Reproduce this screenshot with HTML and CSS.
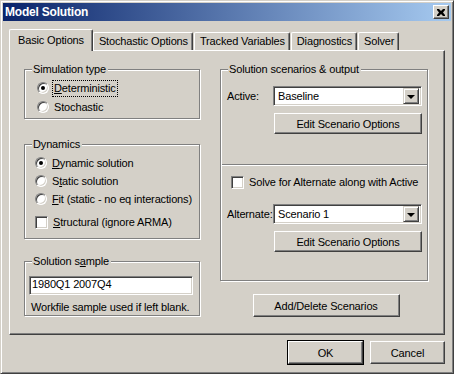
FILE: index.html
```html
<!DOCTYPE html>
<html lang="en">
<head>
    <meta charset="UTF-8">
    <title>Model Solution</title>
    <link rel="stylesheet" href="styles.css">
</head>
<body>

    <div class="window">
        <div class="titlebar">
            <span class="title">Model Solution</span>
            <span class="close-btn">
                <svg width="8" height="7" viewBox="0 0 8 7">
                    <path d="M0 0h2l2 2 2-2h2v1l-2 2.5 2 2.5v1h-2l-2-2-2 2h-2v-1l2-2.5-2-2.5z" fill="#000"/>
                </svg>
            </span>
        </div>

        <div class="content">
            <div class="tabs">
                <div class="tab selected">Basic Options</div>
                <div class="tab">Stochastic Options</div>
                <div class="tab">Tracked Variables</div>
                <div class="tab">Diagnostics</div>
                <div class="tab">Solver</div>
            </div>

            <div class="panel">
                <div class="col-left">
                    <div class="group group-sim">
                        <div class="group-title">Simulation type</div>
                        <div class="group-body">
                            <div class="option option-sim"><span class="radio checked"></span><span class="focus"><u>D</u>eterministic</span></div>
                            <div class="option option-sim"><span class="radio"></span><span class="label-text">Stochastic</span></div>
                        </div>
                    </div>

                    <div class="group group-dyn">
                        <div class="group-title">Dynamics</div>
                        <div class="group-body">
                            <div class="option"><span class="radio checked"></span><span><u>D</u>ynamic solution</span></div>
                            <div class="option"><span class="radio"></span><span>S<u>t</u>atic solution</span></div>
                            <div class="option"><span class="radio"></span><span><u>F</u>it (static - no eq interactions)</span></div>
                            <div class="option option-check"><span class="checkbox"></span><span><u>S</u>tructural (ignore ARMA)</span></div>
                        </div>
                    </div>

                    <div class="group group-sample">
                        <div class="group-title">Solution s<u>a</u>mple</div>
                        <div class="group-body">
                            <div class="edit">1980Q1 2007Q4</div>
                            <div class="hint">Workfile sample used if left blank.</div>
                        </div>
                    </div>
                </div>

                <div class="col-right">
                    <div class="group group-scen">
                        <div class="group-title">Solution scenarios &amp; output</div>
                        <div class="group-body">
                            <div class="field-row field-active">
                                <span class="field-label">Active:</span>
                                <div class="combo">
                                    <span class="combo-text">Baseline</span>
                                    <span class="combo-arrow"><span class="tri"></span></span>
                                </div>
                            </div>
                            <div class="btn-row"><button class="btn btn-wide">Edit Scenario Options</button></div>

                            <div class="separator"></div>

                            <div class="option option-alt"><span class="checkbox"></span><span>Solve for Alternate along with Active</span></div>

                            <div class="field-row field-alt">
                                <span class="field-label">Alternate:</span>
                                <div class="combo">
                                    <span class="combo-text">Scenario 1</span>
                                    <span class="combo-arrow"><span class="tri"></span></span>
                                </div>
                            </div>
                            <div class="btn-row"><button class="btn btn-wide">Edit Scenario Options</button></div>
                        </div>
                    </div>

                    <div class="add-row">
                        <button class="btn btn-add">Add/Delete Scenarios</button>
                    </div>
                </div>
            </div>

            <div class="footer">
                <button class="btn btn-default">OK</button>
                <button class="btn">Cancel</button>
            </div>
        </div>
    </div>

</body>
</html>
```

FILE: styles.css
```css
body {
    margin: 0;
    background-color: #d4d0c8;
    font-family: 'Liberation Sans', Arial, sans-serif;
    font-size: 11px;
    letter-spacing: -0.15px;
    color: #000;
}

.window {
    width: 454px;
    height: 374px;
    box-sizing: border-box;
    border: 1px solid;
    border-color: #d4d0c8 #404040 #404040 #d4d0c8;
    box-shadow: inset 1px 1px 0 #fff, inset -1px -1px 0 #808080;
    padding: 2px;
    background-color: #d4d0c8;
}

/* title bar */
.titlebar {
    height: 18px;
    display: flex;
    align-items: center;
    justify-content: space-between;
    padding: 0 2px 0 2px;
    background: linear-gradient(to right, #0a246a, #a6caf0);
}

.title {
    color: #fff;
    font-weight: bold;
    font-size: 12px;
    letter-spacing: -0.2px;
}

.close-btn {
    width: 16px;
    height: 14px;
    box-sizing: border-box;
    display: flex;
    align-items: center;
    justify-content: center;
    background-color: #d4d0c8;
    border: 1px solid;
    border-color: #fff #404040 #404040 #fff;
    box-shadow: inset -1px -1px 0 #808080;
}

.content {
    padding: 8px 6px 0 6px;
}

/* tabs */
.tabs {
    display: flex;
    align-items: flex-end;
    height: 21px;
}

.tab {
    height: 18px;
    line-height: 17px;
    box-sizing: border-box;
    padding: 0 4px 0 5px;
    border-top: 1px solid #fff;
    border-left: 1px solid #fff;
    border-right: 1px solid #404040;
    box-shadow: inset -1px 0 0 #808080;
    border-radius: 2px 2px 0 0;
    margin-right: 1px;
    white-space: nowrap;
}

.tab.selected {
    height: 22px;
    line-height: 20px;
    padding: 0 8px;
    margin-bottom: -1px;
    margin-right: 0;
    background-color: #d4d0c8;
    position: relative;
    z-index: 1;
}

.panel {
    height: 285px;
    box-sizing: border-box;
    display: flex;
    gap: 20px;
    padding: 18px 14px 0 14px;
    border: 1px solid;
    border-color: #fff #404040 #404040 #fff;
    box-shadow: inset -1px -1px 0 #808080;
}

.col-left {
    width: 176px;
}

.col-right {
    width: 208px;
}

/* group boxes */
.group {
    box-sizing: border-box;
    border: 1px solid #808080;
    box-shadow: inset 1px 1px 0 #fff, 1px 1px 0 #fff;
}

.group-title {
    display: table;
    margin: -7px 0 0 7px;
    padding: 0 2px 0 1px;
    line-height: 13px;
    background-color: #d4d0c8;
}

.group-sim {
    height: 50px;
}

.group-sim .group-body {
    margin-top: 3px;
    padding-left: 12px;
    display: flex;
    flex-direction: column;
    gap: 1px;
}

.group-dyn {
    margin-top: 25px;
    height: 95px;
}

.group-dyn .group-body {
    margin-top: 3px;
    padding-left: 10px;
}

.group-sample {
    margin-top: 22px;
    height: 55px;
}

.group-sample .group-body {
    padding: 0 6px 0 4px;
}

.option {
    height: 18px;
    display: flex;
    align-items: center;
    white-space: nowrap;
}

.option-check {
    margin-top: 5px;
}

.radio {
    width: 12px;
    height: 12px;
    box-sizing: border-box;
    margin-right: 5px;
    border-radius: 50%;
    border: 1px solid;
    border-color: #808080 #fff #fff #808080;
    background-color: #fff;
    box-shadow: inset 1px 1px 0 #404040, inset -1px -1px 0 #d4d0c8;
    display: flex;
    align-items: center;
    justify-content: center;
    flex-shrink: 0;
}

.radio.checked::after {
    content: "";
    width: 4px;
    height: 4px;
    border-radius: 50%;
    background-color: #000;
}

.option-sim .radio {
    margin-right: 4px;
}

.focus {
    outline: 1px dotted #000;
    padding: 0 1px;
    line-height: 15px;
}

.label-text {
    padding-left: 1px;
}

.checkbox {
    width: 13px;
    height: 13px;
    box-sizing: border-box;
    margin-right: 5px;
    border: 1px solid;
    border-color: #808080 #fff #fff #808080;
    background-color: #fff;
    box-shadow: inset 1px 1px 0 #404040, inset -1px -1px 0 #d4d0c8;
    flex-shrink: 0;
}

.edit {
    margin-top: 8px;
    height: 19px;
    box-sizing: border-box;
    padding: 0 2px;
    line-height: 15px;
    background-color: #fff;
    border: 1px solid;
    border-color: #808080 #fff #fff #808080;
    box-shadow: inset 1px 1px 0 #404040, inset -1px -1px 0 #d4d0c8;
}

.hint {
    margin-top: 6px;
    padding-left: 2px;
    line-height: 13px;
    white-space: nowrap;
}

/* scenario group */
.group-scen {
    height: 212px;
}

.group-scen .group-body {
    padding: 0 5px 0 6px;
}

.field-row {
    display: flex;
    align-items: center;
    height: 20px;
}

.field-active {
    margin-top: 10px;
}

.field-alt {
    margin-top: 13px;
}

.field-label {
    width: 46px;
    flex-shrink: 0;
}

.combo {
    flex: 1;
    height: 20px;
    box-sizing: border-box;
    display: flex;
    align-items: center;
    justify-content: space-between;
    padding: 2px 2px 2px 4px;
    background-color: #fff;
    border: 1px solid;
    border-color: #808080 #fff #fff #808080;
    box-shadow: inset 1px 1px 0 #404040, inset -1px -1px 0 #d4d0c8;
}

.combo-arrow {
    width: 16px;
    height: 16px;
    box-sizing: border-box;
    display: flex;
    align-items: center;
    justify-content: center;
    background-color: #d4d0c8;
    border: 1px solid;
    border-color: #d4d0c8 #404040 #404040 #d4d0c8;
    box-shadow: inset 1px 1px 0 #fff, inset -1px -1px 0 #808080;
}

.tri {
    width: 0;
    height: 0;
    border-left: 4px solid transparent;
    border-right: 4px solid transparent;
    border-top: 4px solid #000;
    margin-top: 1px;
}

.btn-row {
    display: flex;
    justify-content: flex-end;
    margin-top: 7px;
}

.separator {
    margin: 30px -5px 0 -5px;
    height: 0;
    border-top: 1px solid #808080;
    border-bottom: 1px solid #fff;
}

.option-alt {
    margin: 7px 0 0 4px;
}

/* buttons */
.btn {
    font-family: 'Liberation Sans', Arial, sans-serif;
    font-size: 11px;
    letter-spacing: -0.15px;
    color: #000;
    width: 75px;
    height: 23px;
    padding: 0;
    background-color: #d4d0c8;
    border: 1px solid;
    border-color: #fff #404040 #404040 #fff;
    box-shadow: inset -1px -1px 0 #808080;
    border-radius: 0;
}

.btn-wide {
    width: 148px;
    height: 21px;
}

.add-row {
    display: flex;
    justify-content: center;
    margin-top: 13px;
    padding-left: 4px;
}

.btn-add {
    width: 147px;
    height: 23px;
}

.btn-default {
    outline: 1px solid #000;
    outline-offset: 0;
}

.footer {
    display: flex;
    justify-content: flex-end;
    gap: 7px;
    margin-top: 6px;
}
```
